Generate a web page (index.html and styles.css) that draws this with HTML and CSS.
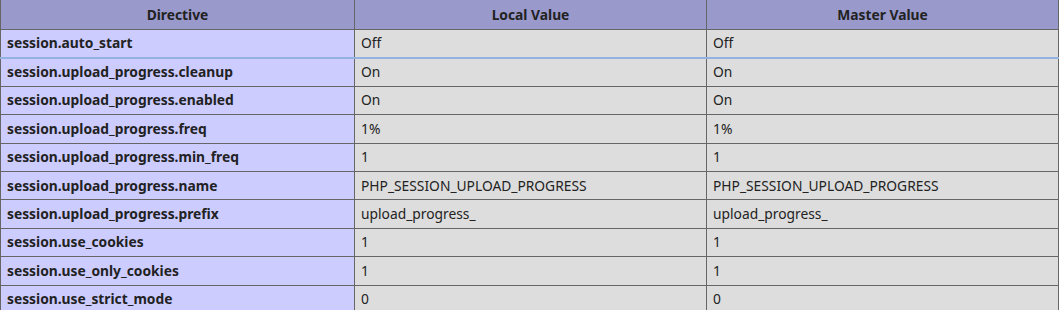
FILE: index.html
```html
<!DOCTYPE html>
<html>
<head>
<meta charset="utf-8">
<link rel="stylesheet" href="styles.css">
</head>
<body>
<table class="info">
  <colgroup><col class="c1"><col class="c2"><col class="c3"></colgroup>
  <tr class="head"><th>Directive</th><th>Local Value</th><th>Master Value</th></tr>
  <tr class="first"><td class="e">session.auto_start</td><td class="v">Off</td><td class="v">Off</td></tr>
  <tr><td class="e">session.upload_progress.cleanup</td><td class="v">On</td><td class="v">On</td></tr>
  <tr><td class="e">session.upload_progress.enabled</td><td class="v">On</td><td class="v">On</td></tr>
  <tr><td class="e">session.upload_progress.freq</td><td class="v">1%</td><td class="v">1%</td></tr>
  <tr><td class="e">session.upload_progress.min_freq</td><td class="v">1</td><td class="v">1</td></tr>
  <tr><td class="e">session.upload_progress.name</td><td class="v">PHP_SESSION_UPLOAD_PROGRESS</td><td class="v">PHP_SESSION_UPLOAD_PROGRESS</td></tr>
  <tr><td class="e">session.upload_progress.prefix</td><td class="v">upload_progress_</td><td class="v">upload_progress_</td></tr>
  <tr><td class="e">session.use_cookies</td><td class="v">1</td><td class="v">1</td></tr>
  <tr><td class="e">session.use_only_cookies</td><td class="v">1</td><td class="v">1</td></tr>
  <tr><td class="e">session.use_strict_mode</td><td class="v">0</td><td class="v">0</td></tr>
</table>
</body>
</html>
```
FILE: styles.css
```css
html, body {
  margin: 0;
  padding: 0;
  background: #ffffff;
}
body {
  font-family: "Noto Sans", "Open Sans", sans-serif;
  font-size: 13.8px;
  color: #222222;
}
.info {
  border-collapse: collapse;
  width: 1058px;
  table-layout: fixed;
  margin-top: -1px;
}
.c1 { width: 354px; }
.c2 { width: 352px; }
.c3 { width: 352px; }
.info th, .info td {
  border: 1px solid #666666;
  padding: 0 6px;
  text-align: left;
  white-space: nowrap;
  overflow: hidden;
  line-height: 18px;
}
.info tr { height: 28.4px; }
.info tr.head { height: 30px; }
.info th {
  background: #9999cc;
  text-align: center;
  font-weight: bold;
}
.info td.e {
  background: #ccccff;
  font-weight: bold;
}
.info td.v {
  background: #dddddd;
}
.info tr.first td {
  border-bottom: 2px solid #93b2e2;
}
```
